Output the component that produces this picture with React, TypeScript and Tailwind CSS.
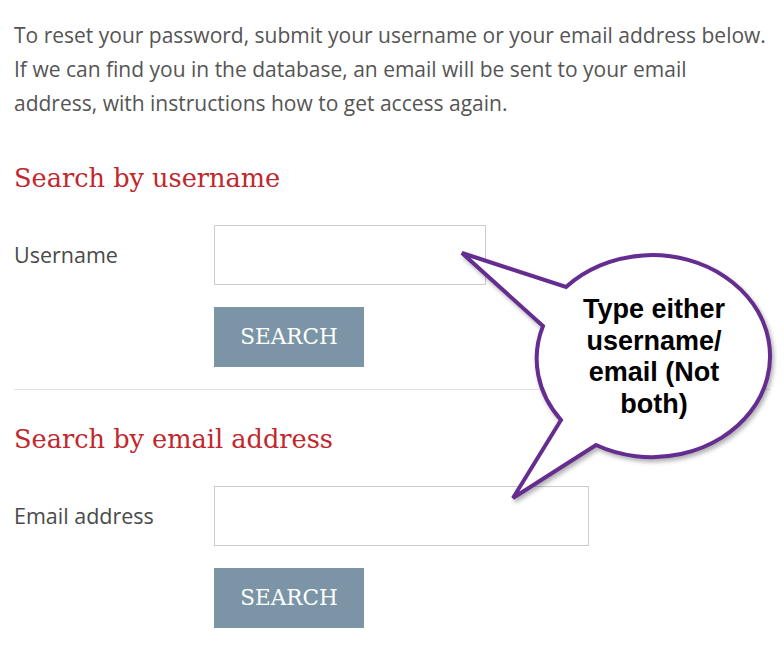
import React from 'react';

const bodyFont = { fontFamily: '"Open Sans", "Noto Sans", sans-serif' };

const SearchSection = ({ title, label, inputWidth }: { title: string; label: string; inputWidth: string }) => {
  return (
    <div>
      <h3 className="text-[25.6px] leading-[36px] text-[#c1272d] font-['DejaVu_Serif',serif]">{title}</h3>
      <div className="mt-[29px] flex items-center">
        <label className="w-[200px] text-[21.5px] text-[#4a4a4a]">{label}</label>
        <input type="text" className={`h-[60px] ${inputWidth} border border-[#cccccc] bg-white outline-none`} />
      </div>
      <div className="mt-[22px] pl-[200px]">
        <button className="h-[60px] w-[150px] bg-[#7b95a6] text-[21.5px] text-white font-['DejaVu_Serif',serif]">
          SEARCH
        </button>
      </div>
    </div>
  );
};

const App = () => {
  return (
    <div className="relative h-[649px] w-[784px] overflow-hidden bg-white" style={bodyFont}>
      <div className="pl-[14px] pt-[18px]">
        <p className="text-[21px] leading-[34px] text-[#555555]">
          To reset your password, submit your username or your email address below.
          <br />
          If we can find you in the database, an email will be sent to your email
          <br />
          address, with instructions how to get access again.
        </p>

        <div className="mt-[40px]">
          <SearchSection title="Search by username" label="Username" inputWidth="w-[272px]" />
        </div>

        <div className="mt-[22px] w-[756px] border-t border-[#e2e2e2]" />

        <div className="mt-[31px]">
          <SearchSection title="Search by email address" label="Email address" inputWidth="w-[375px]" />
        </div>
      </div>

      {/* callout bubble */}
      <svg
        className="pointer-events-none absolute left-0 top-0 drop-shadow-[2px_3px_2px_rgba(0,0,0,0.3)]"
        width="784"
        height="649"
        viewBox="0 0 784 649"
      >
        <path
          d="M 566 287 A 118 101 0 1 1 596 445 L 513 498 L 561 420 A 118 101 0 0 1 543 326 L 462 253 Z"
          fill="#ffffff"
          stroke="#662d91"
          strokeWidth="4"
          strokeLinejoin="miter"
        />
      </svg>
      <div className="pointer-events-none absolute left-[554px] top-[294px] w-[200px] text-center text-[27px] font-bold leading-[31.5px] text-black font-['Liberation_Sans',Arial,sans-serif]">
        Type either
        <br />
        username/
        <br />
        email (Not
        <br />
        both)
      </div>
    </div>
  );
};

export default App;
